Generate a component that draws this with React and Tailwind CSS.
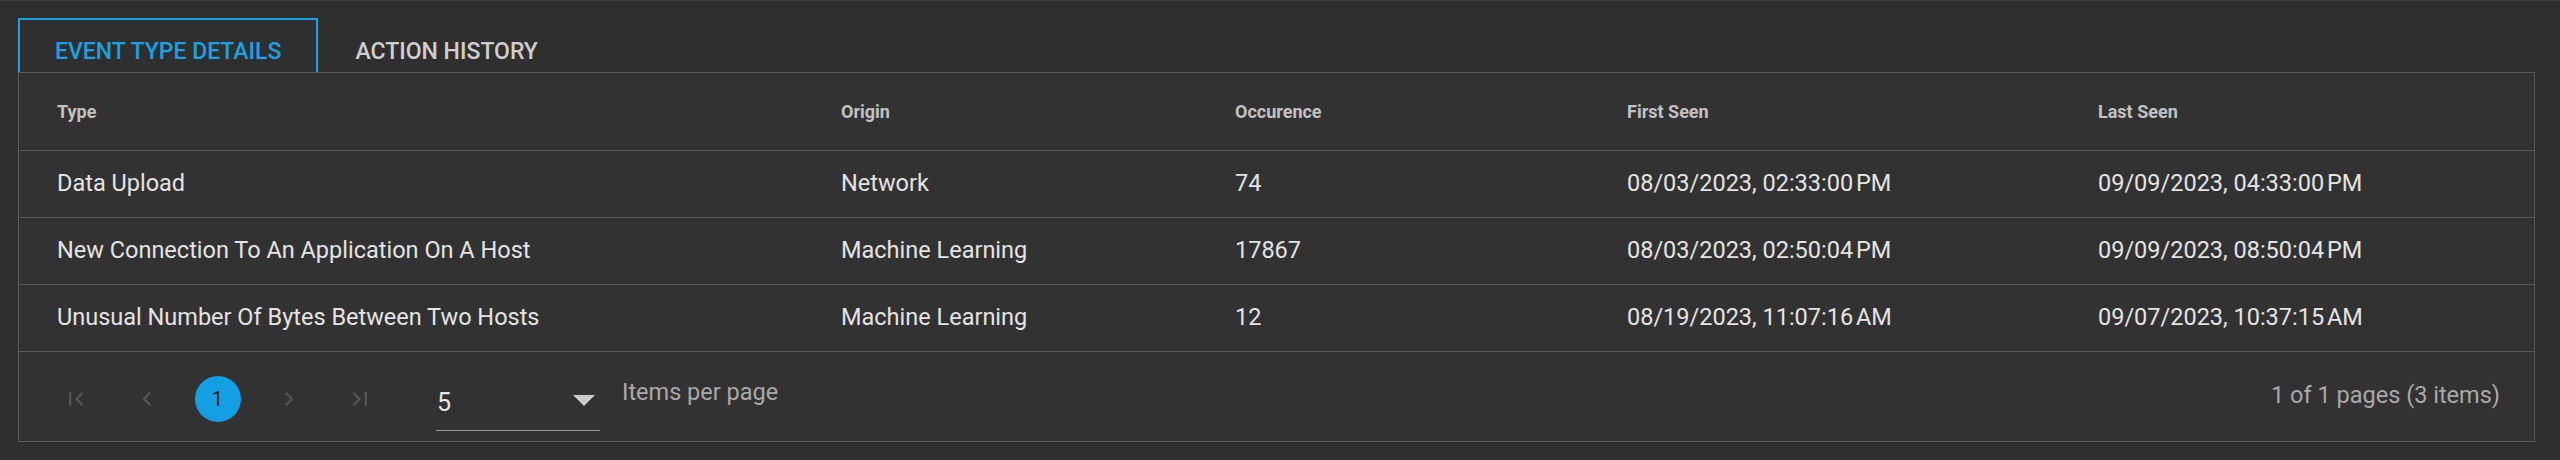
import React, { useState } from 'react';

const columns = [
  { key: 'type', label: 'Type' },
  { key: 'origin', label: 'Origin' },
  { key: 'count', label: 'Occurence' },
  { key: 'first', label: 'First Seen' },
  { key: 'last', label: 'Last Seen' },
];

const events = [
  {
    type: 'Data Upload',
    origin: 'Network',
    count: '74',
    first: '08/03/2023, 02:33:00\u202fPM',
    last: '09/09/2023, 04:33:00\u202fPM',
  },
  {
    type: 'New Connection To An Application On A Host',
    origin: 'Machine Learning',
    count: '17867',
    first: '08/03/2023, 02:50:04\u202fPM',
    last: '09/09/2023, 08:50:04\u202fPM',
  },
  {
    type: 'Unusual Number Of Bytes Between Two Hosts',
    origin: 'Machine Learning',
    count: '12',
    first: '08/19/2023, 11:07:16\u202fAM',
    last: '09/07/2023, 10:37:15\u202fAM',
  },
];

const gridCols = 'grid grid-cols-[784px_394px_392px_471px_1fr]';

const PagerIcon = ({ d }) => (
  <svg width="28" height="28" viewBox="0 0 24 24" fill="#545454">
    <path d={d} />
  </svg>
);

const icons = {
  first: 'M18.41 16.59L13.82 12l4.59-4.59L17 6l-6 6 6 6zM6 6h2v12H6z',
  prev: 'M15.41 7.41L14 6l-6 6 6 6 1.41-1.41L10.83 12z',
  next: 'M10 6L8.59 7.41 13.17 12l-4.58 4.59L10 18l6-6z',
  last: 'M5.59 7.41L10.18 12l-4.59 4.59L7 18l6-6-6-6zM16 6h2v12h-2z',
};

const App = () => {
  const [tab, setTab] = useState('details');

  const tabClass = (id) =>
    `h-[54px] px-[35px] pt-[20px] flex items-start text-[23px] leading-none font-medium uppercase ${
      tab === id
        ? 'border-2 border-b-0 border-[#1ba1e2] text-[#1ba1e2]'
        : 'border-2 border-b-0 border-transparent text-[#cfcfcf]'
    }`;

  return (
    <div className="min-h-[460px] bg-[#2f2f2f] border-t border-[#3c3c3c] pt-[17px] pl-[18px] font-['Roboto','Liberation_Sans',sans-serif]">
      {/* Tabs */}
      <div className="flex h-[54px]">
        <button onClick={() => setTab('details')} className={tabClass('details')}>
          Event Type Details
        </button>
        <button onClick={() => setTab('history')} className={tabClass('history')}>
          Action History
        </button>
      </div>

      {/* Table */}
      <div className="w-[2517px] border border-[#5a5a5a] bg-[#323232]">
        <div className={`${gridCols} h-[78px] items-center border-b border-[#5a5a5a]`}>
          {columns.map((c) => (
            <div key={c.key} className="pl-[38px] text-[18px] leading-none font-bold text-[#c2c2c2]">
              {c.label}
            </div>
          ))}
        </div>

        {events.map((ev) => (
          <div key={ev.type} className={`${gridCols} h-[67px] items-center border-b border-[#5a5a5a]`}>
            {columns.map((c) => (
              <div key={c.key} className="pl-[38px] text-[23.5px] leading-none text-[#e4e4e4] whitespace-nowrap">
                {ev[c.key]}
              </div>
            ))}
          </div>
        ))}

        {/* Pager */}
        <div className="h-[89px] flex items-start pl-[21px] pr-[34px]">
          <div className="flex mt-[24px]">
            <div className="w-[71px] h-[46px] flex items-center justify-center">
              <PagerIcon d={icons.first} />
            </div>
            <div className="w-[71px] h-[46px] flex items-center justify-center">
              <PagerIcon d={icons.prev} />
            </div>
            <div className="w-[71px] h-[46px] flex items-center justify-center">
              <div className="w-[46px] h-[46px] rounded-full bg-[#139fe4] flex items-center justify-center text-[21px] leading-none text-[#262626]">
                1
              </div>
            </div>
            <div className="w-[71px] h-[46px] flex items-center justify-center">
              <PagerIcon d={icons.next} />
            </div>
            <div className="w-[71px] h-[46px] flex items-center justify-center">
              <PagerIcon d={icons.last} />
            </div>
          </div>

          <div className="ml-[41px] mt-[29px] w-[164px] h-[50px] border-b border-[#9a9a9a] flex items-start justify-between pl-[1px] pr-[5px]">
            <span className="mt-[9px] text-[25px] leading-none text-[#e6e6e6]">5</span>
            <svg className="mt-[14px]" width="22" height="11" viewBox="0 0 22 11">
              <polygon points="0,0 22,0 11,11" fill="#cdcdcd" />
            </svg>
          </div>

          <span className="ml-[22px] mt-[29px] text-[23.5px] leading-none text-[#a9a9a9]">Items per page</span>

          <span className="ml-auto mt-[32px] text-[23.5px] leading-none text-[#a9a9a9]">1 of 1 pages (3 items)</span>
        </div>
      </div>
    </div>
  );
};

export default App;
